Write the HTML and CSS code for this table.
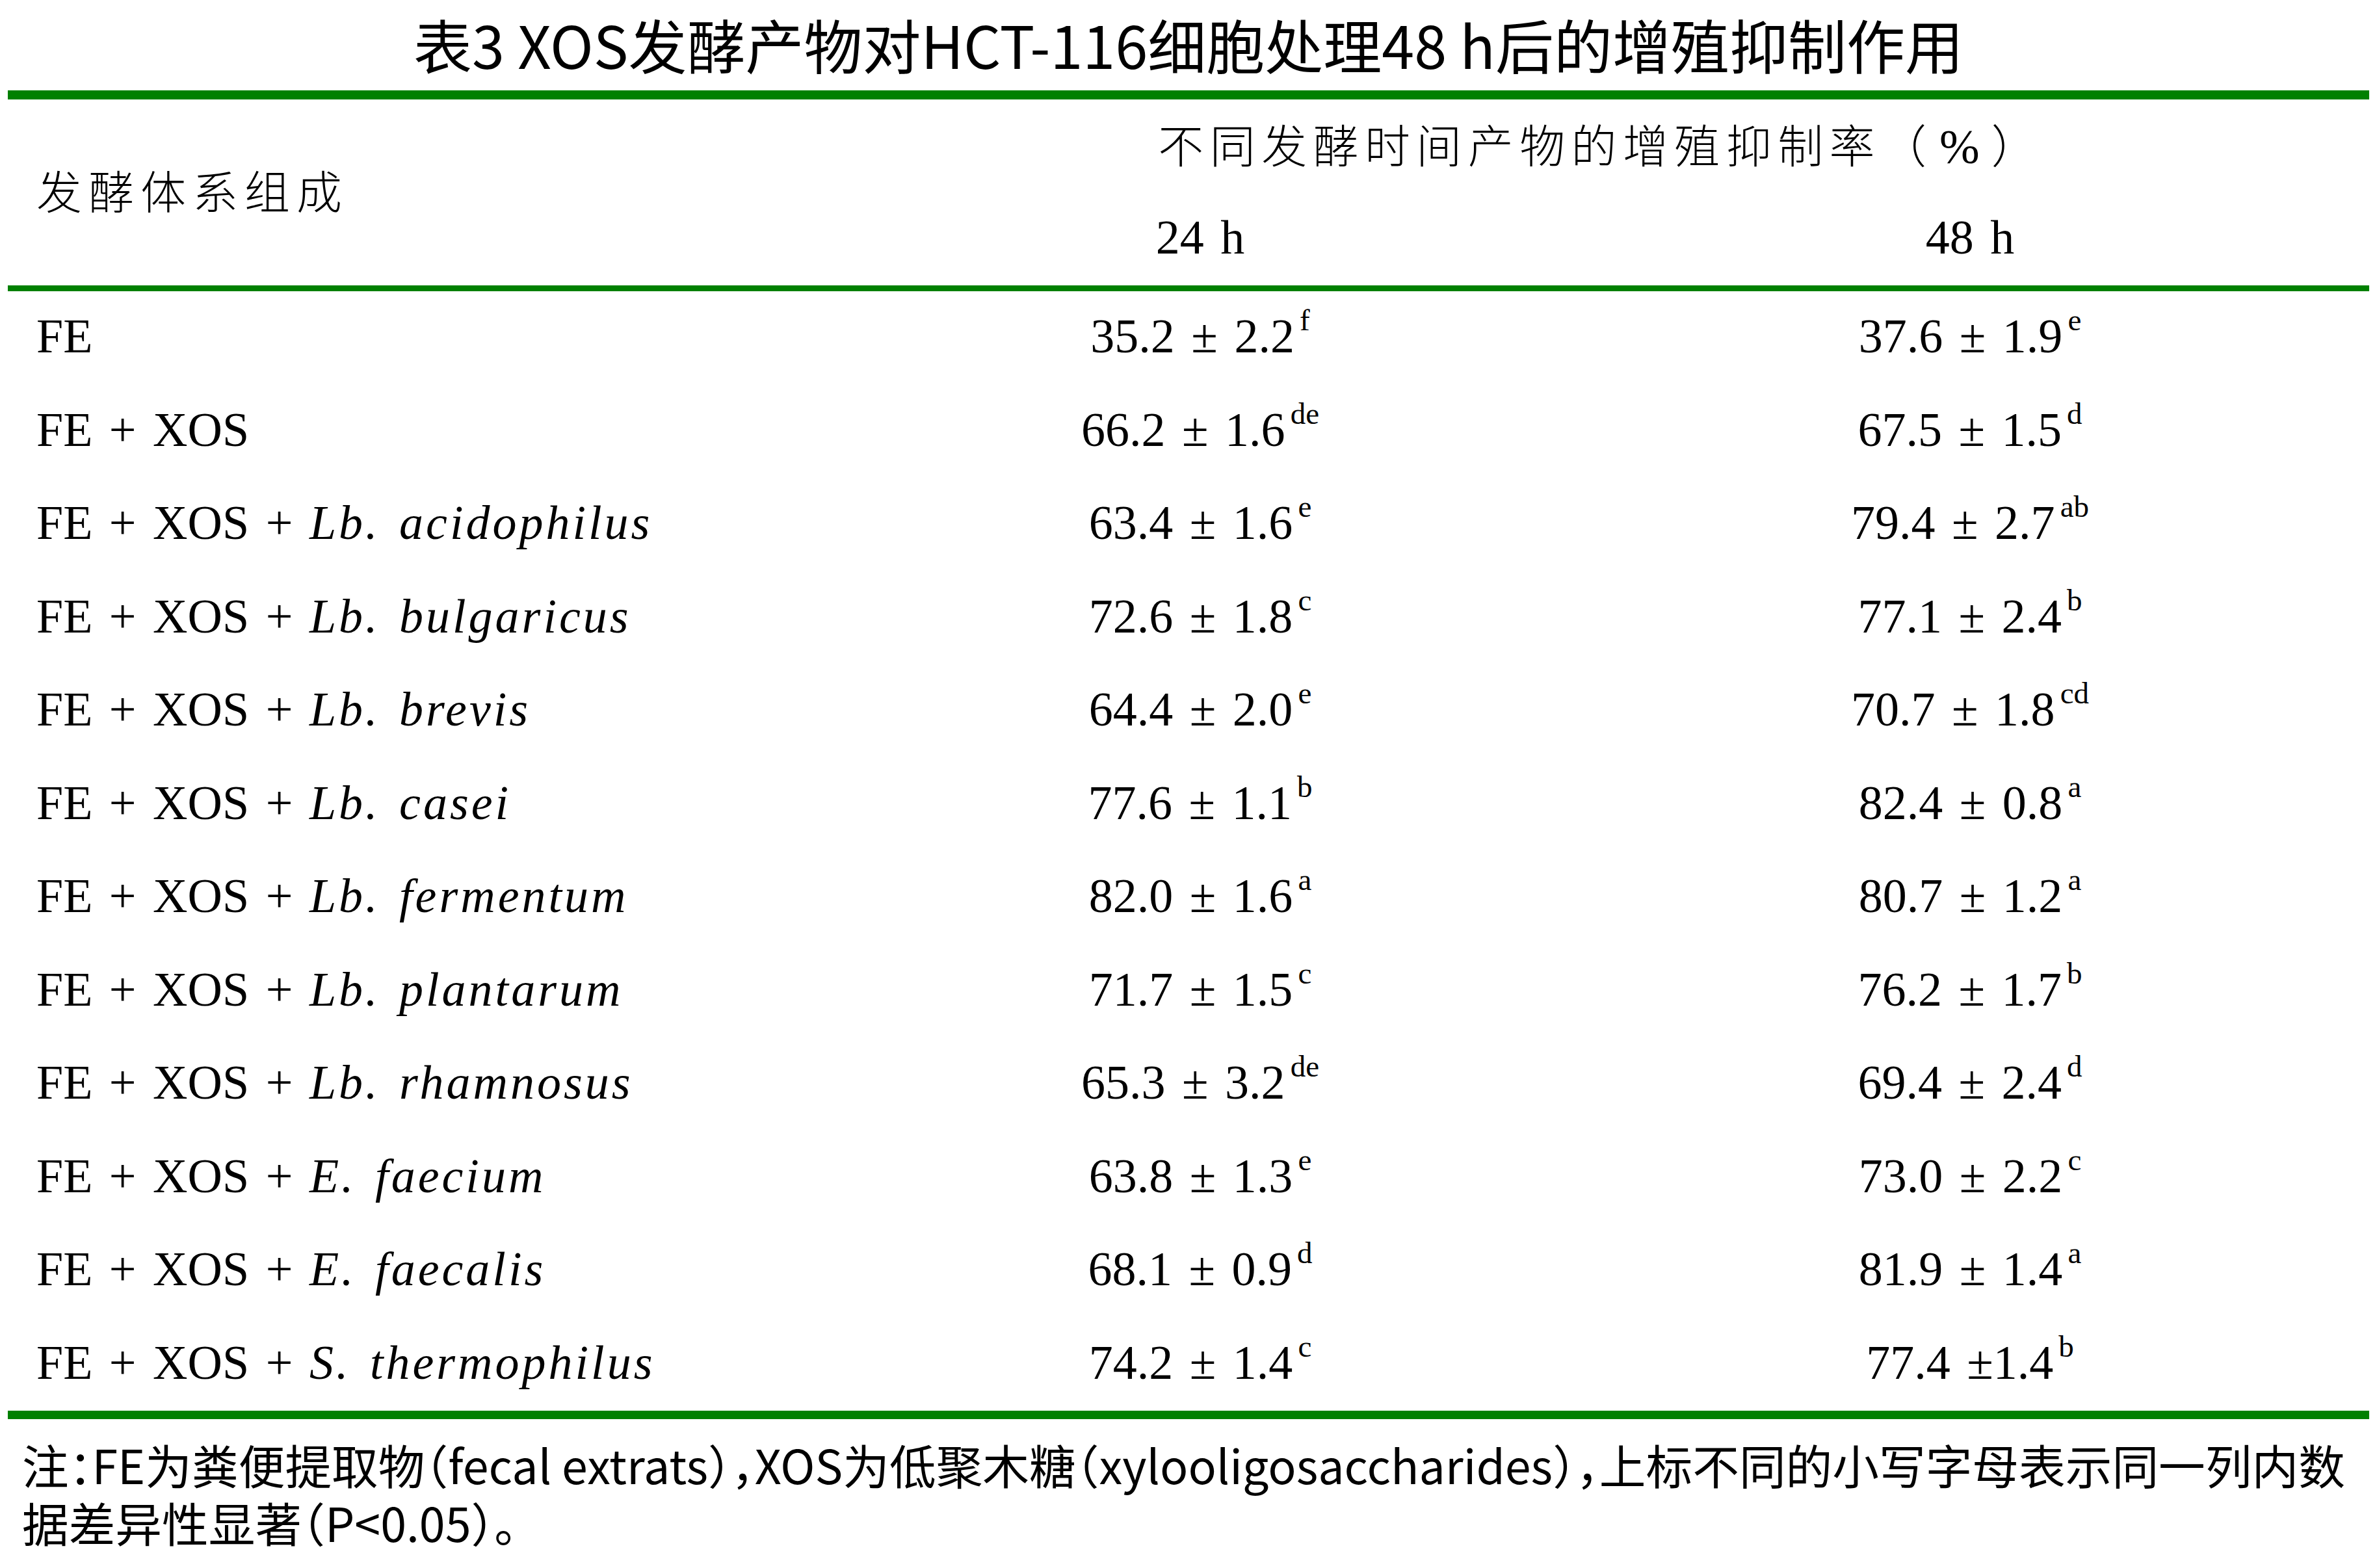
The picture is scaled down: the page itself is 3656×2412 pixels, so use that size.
FILE: index.html
```html
<!DOCTYPE html>
<html lang="zh-CN">
<head>
<meta charset="utf-8">
<title>表3 XOS发酵产物对HCT-116细胞处理48 h后的增殖抑制作用</title>
<link rel="stylesheet" href="styles.css">
</head>
<body>
<div class="page">
  <h1 class="title">表3 XOS发酵产物对HCT-116细胞处理48 h后的增殖抑制作用</h1>
  <div class="rule rule-top"></div>
  <div class="thead">
    <div class="th th-system">发酵体系组成</div>
    <div class="th th-group">不同发酵时间产物的增殖抑制率<span class="paren">（<span class="pct">%</span>）</span></div>
    <div class="th th-time">24 h</div>
    <div class="th th-time">48 h</div>
  </div>
  <div class="rule rule-mid"></div>
  <div class="tbody">
    <div class="td td-name">FE</div>
    <div class="td">35.2 ± 2.2<sup>f</sup></div>
    <div class="td">37.6 ± 1.9<sup>e</sup></div>

    <div class="td td-name">FE + XOS</div>
    <div class="td">66.2 ± 1.6<sup>de</sup></div>
    <div class="td">67.5 ± 1.5<sup>d</sup></div>

    <div class="td td-name">FE + XOS + <i>Lb. acidophilus</i></div>
    <div class="td">63.4 ± 1.6<sup>e</sup></div>
    <div class="td">79.4 ± 2.7<sup>ab</sup></div>

    <div class="td td-name">FE + XOS + <i>Lb. bulgaricus</i></div>
    <div class="td">72.6 ± 1.8<sup>c</sup></div>
    <div class="td">77.1 ± 2.4<sup>b</sup></div>

    <div class="td td-name">FE + XOS + <i>Lb. brevis</i></div>
    <div class="td">64.4 ± 2.0<sup>e</sup></div>
    <div class="td">70.7 ± 1.8<sup>cd</sup></div>

    <div class="td td-name">FE + XOS + <i>Lb. casei</i></div>
    <div class="td">77.6 ± 1.1<sup>b</sup></div>
    <div class="td">82.4 ± 0.8<sup>a</sup></div>

    <div class="td td-name">FE + XOS + <i>Lb. fermentum</i></div>
    <div class="td">82.0 ± 1.6<sup>a</sup></div>
    <div class="td">80.7 ± 1.2<sup>a</sup></div>

    <div class="td td-name">FE + XOS + <i>Lb. plantarum</i></div>
    <div class="td">71.7 ± 1.5<sup>c</sup></div>
    <div class="td">76.2 ± 1.7<sup>b</sup></div>

    <div class="td td-name">FE + XOS + <i>Lb. rhamnosus</i></div>
    <div class="td">65.3 ± 3.2<sup>de</sup></div>
    <div class="td">69.4 ± 2.4<sup>d</sup></div>

    <div class="td td-name">FE + XOS + <i>E. faecium</i></div>
    <div class="td">63.8 ± 1.3<sup>e</sup></div>
    <div class="td">73.0 ± 2.2<sup>c</sup></div>

    <div class="td td-name">FE + XOS + <i>E. faecalis</i></div>
    <div class="td">68.1 ± 0.9<sup>d</sup></div>
    <div class="td">81.9 ± 1.4<sup>a</sup></div>

    <div class="td td-name">FE + XOS + <i>S. thermophilus</i></div>
    <div class="td">74.2 ± 1.4<sup>c</sup></div>
    <div class="td">77.4 ±1.4<sup>b</sup></div>
  </div>
  <div class="rule rule-bottom"></div>
  <p class="note">注：FE为粪便提取物（fecal extrats），XOS为低聚木糖（xylooligosaccharides），上标不同的小写字母表示同一列内数据差异性显著（P&lt;0.05）。</p>
</div>
</body>
</html>
```

FILE: styles.css
```css
html, body {
  margin: 0;
  padding: 0;
  background: #ffffff;
  color: #000000;
}

.page {
  width: 3656px;
  box-sizing: border-box;
  padding: 0 12px;
}

.title {
  margin: 0;
  height: 139px;
  box-sizing: border-box;
  padding-bottom: 4px;
  font-family: "Noto Sans CJK SC", "Noto Sans", sans-serif;
  font-weight: 400;
  font-size: 90px;
  line-height: 135px;
  text-align: center;
  white-space: nowrap;
}

.rule {
  background: #008000;
}
.rule-top { height: 14px; }
.rule-mid { height: 9px; }
.rule-bottom { height: 13px; }

.thead {
  display: grid;
  grid-template-columns: 1fr 1184px 1184px;
  grid-template-rows: 143px 143px;
  padding-right: 22px;
}

.th {
  box-sizing: border-box;
  font-family: "Noto Sans CJK SC", sans-serif;
  font-weight: 300;
  font-size: 70px;
  letter-spacing: 10px;
  white-space: nowrap;
}

.th-system {
  grid-row: 1 / 3;
  grid-column: 1;
  padding-left: 44px;
  line-height: 278px;
}

.th-group {
  grid-row: 1;
  grid-column: 2 / 4;
  text-align: center;
  line-height: 135px;
  letter-spacing: 9.4px;
  padding-left: 38px;
}

.paren {
  letter-spacing: 0;
}

.pct {
  font-family: "Liberation Serif", serif;
  font-weight: 400;
  font-size: 74px;
  margin: 0 18px 0 20px;
}

.th-time {
  grid-row: 2;
  text-align: center;
  font-family: "Liberation Serif", serif;
  font-weight: 400;
  font-size: 74px;
  line-height: 139px;
  letter-spacing: 0;
  word-spacing: 7px;
}

.tbody {
  display: grid;
  grid-template-columns: 1fr 1184px 1184px;
  grid-auto-rows: 143.5px;
  padding-right: 22px;
}

.td {
  box-sizing: border-box;
  text-align: center;
  font-family: "Liberation Serif", serif;
  font-size: 74px;
  line-height: 138px;
  word-spacing: 7px;
  white-space: pre;
}

.td-name {
  text-align: left;
  padding-left: 44px;
}

.td i {
  letter-spacing: 4px;
}

.td sup {
  font-size: 47px;
  line-height: 0;
  vertical-align: 34px;
  margin-left: 8px;
  word-spacing: 0;
}

.note {
  margin: 0;
  padding: 25px 12px 0 22px;
  font-family: "Noto Sans CJK SC", sans-serif;
  font-size: 71.7px;
  line-height: 89px;
  font-feature-settings: "halt";
}
```
